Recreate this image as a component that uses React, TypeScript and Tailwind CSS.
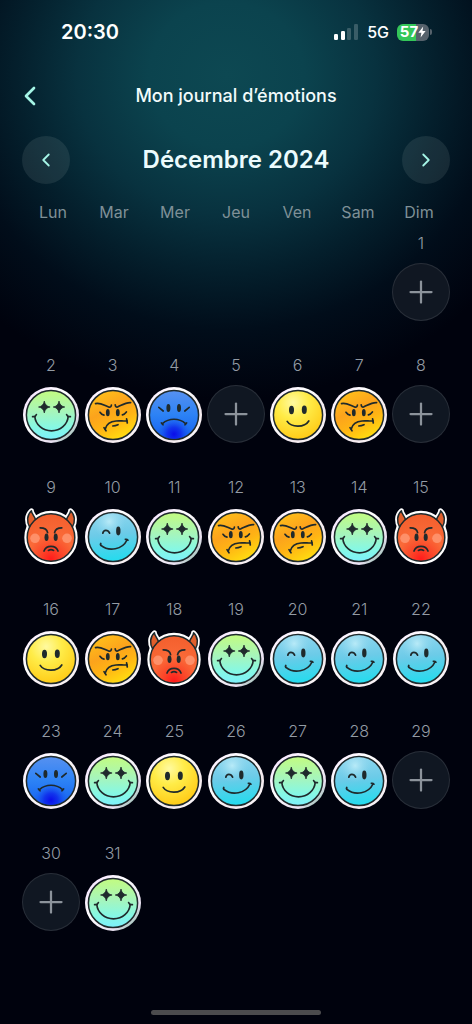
import { ChevronLeft, ChevronRight, Plus } from "lucide-react";
import type { ReactNode } from "react";

type Mood = "joy" | "annoyed" | "sad" | "happy" | "devil" | "wink";

const INK = "#1f2a2c";

const WEEKDAYS = ["Lun", "Mar", "Mer", "Jeu", "Ven", "Sam", "Dim"];

const MOOD_LABELS: Record<Mood, string> = {
  joy: "Émerveillé",
  annoyed: "Agacé",
  sad: "Triste",
  happy: "Content",
  devil: "En colère",
  wink: "Complice",
};

// December 2024 starts on a Sunday, null means nothing was logged that day
const FIRST_DAY_OFFSET = 6;
const ENTRIES: (Mood | null)[] = [
  null,
  "joy", "annoyed", "sad", null, "happy", "annoyed", null,
  "devil", "wink", "joy", "annoyed", "annoyed", "joy", "devil",
  "happy", "annoyed", "devil", "joy", "wink", "wink", "wink",
  "sad", "joy", "happy", "wink", "joy", "wink", null,
  null, "joy",
];

const MoodGradients = () => (
  <svg width="0" height="0" className="absolute" aria-hidden="true">
    <defs>
      <linearGradient id="rim" x1="0" y1="0" x2="1" y2="1">
        <stop offset="0" stopColor="#fbeaff" />
        <stop offset="0.35" stopColor="#ffffff" />
        <stop offset="0.7" stopColor="#f4e9ee" />
        <stop offset="1" stopColor="#ffffff" />
      </linearGradient>
      <linearGradient id="rim-joy" x1="0" y1="0" x2="1" y2="1">
        <stop offset="0" stopColor="#f3dcff" />
        <stop offset="0.4" stopColor="#ffffff" />
        <stop offset="0.75" stopColor="#e8dff0" />
        <stop offset="0.88" stopColor="#9fc4b8" />
        <stop offset="1" stopColor="#ffffff" />
      </linearGradient>
      <linearGradient id="joy" x1="0" y1="0" x2="0" y2="1">
        <stop offset="0.05" stopColor="#c0fb86" />
        <stop offset="0.45" stopColor="#a5f5bd" />
        <stop offset="0.75" stopColor="#86f8e4" />
        <stop offset="1" stopColor="#7cf0fb" />
      </linearGradient>
      <linearGradient id="annoyed" x1="0.2" y1="0" x2="0.7" y2="1">
        <stop offset="0" stopColor="#ffc21a" />
        <stop offset="0.4" stopColor="#fca31c" />
        <stop offset="0.65" stopColor="#ffb414" />
        <stop offset="1" stopColor="#ffe010" />
      </linearGradient>
      <linearGradient id="sad" x1="0" y1="0" x2="0" y2="1">
        <stop offset="0" stopColor="#5791f0" />
        <stop offset="0.5" stopColor="#2c82f5" />
        <stop offset="1" stopColor="#1460f0" />
      </linearGradient>
      <radialGradient id="sad-glow" cx="0.5" cy="0.9" r="0.36">
        <stop offset="0" stopColor="#0a08e8" stopOpacity="0.95" />
        <stop offset="0.4" stopColor="#0c1cea" stopOpacity="0.7" />
        <stop offset="1" stopColor="#1460f0" stopOpacity="0" />
      </radialGradient>
      <radialGradient id="happy" cx="0.4" cy="0.25" r="0.8">
        <stop offset="0" stopColor="#fffaa0" />
        <stop offset="0.4" stopColor="#ffec48" />
        <stop offset="1" stopColor="#ffc812" />
      </radialGradient>
      <radialGradient id="devil" cx="0.5" cy="0.95" r="0.9">
        <stop offset="0" stopColor="#ff1c1c" />
        <stop offset="0.25" stopColor="#fb4428" />
        <stop offset="0.55" stopColor="#fa6a38" />
        <stop offset="1" stopColor="#f4602e" />
      </radialGradient>
      <linearGradient id="wink" x1="0.4" y1="0" x2="0.5" y2="1">
        <stop offset="0" stopColor="#8fd6ee" />
        <stop offset="0.45" stopColor="#6ccbe8" />
        <stop offset="1" stopColor="#22dcee" />
      </linearGradient>
      <radialGradient id="wink-glow" cx="0.42" cy="0.18" r="0.35">
        <stop offset="0" stopColor="#c6f1fb" stopOpacity="0.8" />
        <stop offset="1" stopColor="#8fd6ee" stopOpacity="0" />
      </radialGradient>
    </defs>
  </svg>
);

const Face = ({ fill, rim = "url(#rim)" }: { fill: string; rim?: string }) => (
  <>
    <circle cx="29" cy="30" r="28" fill={rim} />
    <circle cx="29" cy="30" r="24.6" fill={fill} stroke={INK} strokeWidth="1.5" />
  </>
);

const Ink = ({ children }: { children: ReactNode }) => (
  <g fill="none" stroke={INK} strokeWidth="1.7" strokeLinecap="round" strokeLinejoin="round">
    {children}
  </g>
);

const HORNS =
  "M7.6 20C4.6 14.5 4.8 8 9.4 3.8C9.4 6.8 12.6 8.6 13.8 13.6ZM50.4 20C53.4 14.5 53.2 8 48.6 3.8C48.6 6.8 45.4 8.6 44.2 13.6Z";

const MOOD_ART: Record<Mood, ReactNode> = {
  joy: (
    <>
      <Face fill="url(#joy)" rim="url(#rim-joy)" />
      <path
        d="M22.3 16Q23.1 21.2 28.1 22Q23.1 22.8 22.3 28Q21.5 22.8 16.5 22Q21.5 21.2 22.3 16ZM37 16Q37.8 21.2 42.8 22Q37.8 22.8 37 28Q36.2 22.8 31.2 22Q36.2 21.2 37 16Z"
        fill={INK}
        stroke={INK}
        strokeWidth="0.7"
      />
      <Ink>
        <path d="M12.8 31.5C13.5 39.5 20.5 45.8 29.5 45.8S45.5 39.5 46.2 31.5" />
        <path d="M10.6 31.6C12 31.9 13.8 31.4 14.4 29.6M48.4 31.6C47 31.9 45.2 31.4 44.6 29.6" />
      </Ink>
    </>
  ),
  annoyed: (
    <>
      <Face fill="url(#annoyed)" />
      <ellipse cx="23.8" cy="27.7" rx="1.9" ry="3.6" fill={INK} />
      <ellipse cx="33.8" cy="27.7" rx="1.9" ry="3.6" fill={INK} />
      <Ink>
        <path d="M11.5 18.6C16 17.2 20.5 20.6 25.2 22.2Q27.2 22.4 27.4 20" />
        <path d="M31.2 19.8Q31.4 22.4 33.6 22C38 20 42 17.2 46.6 17.6" />
        <path d="M16 27.3Q17.6 29.8 20 30.2M42.4 27Q40.6 29.4 38.4 29.8" />
        <path d="M21.2 44C22.6 38.6 27 36.4 32 36C36.5 35.6 40 36.4 43 35.8" />
        <path d="M20 42.6L22 45.8M42.6 33.8L43.3 38M28.8 41Q31.4 40.8 34 39.7" />
      </Ink>
    </>
  ),
  sad: (
    <>
      <Face fill="url(#sad)" />
      <circle cx="29" cy="30" r="23.9" fill="url(#sad-glow)" />
      <ellipse cx="23.4" cy="23" rx="2" ry="4.1" fill={INK} />
      <ellipse cx="34" cy="23" rx="2" ry="4.1" fill={INK} />
      <Ink>
        <path d="M13.8 22.4L18.2 26M44.2 22.4L39.8 26" />
        <path d="M17.4 38.6C24 32.8 34 32.8 40.6 38.6" />
        <path d="M16.4 38L18 39.8M41.6 38L40 39.8" />
      </Ink>
    </>
  ),
  happy: (
    <>
      <Face fill="url(#happy)" />
      <ellipse cx="22.5" cy="25" rx="2.5" ry="4.2" fill={INK} />
      <ellipse cx="35.3" cy="24.8" rx="2.5" ry="4.2" fill={INK} />
      <Ink>
        <path d="M18.2 36.4C22.4 42.8 35.6 42.8 39.8 36" />
      </Ink>
    </>
  ),
  devil: (
    <>
      <g fill="#fff" stroke="#fff" strokeWidth="5" strokeLinejoin="round">
        <circle cx="29" cy="30.5" r="24.2" />
        <path d={HORNS} />
      </g>
      <path d={HORNS} fill="#e05f2c" stroke={INK} strokeWidth="1.5" strokeLinejoin="round" />
      <circle cx="29" cy="30.5" r="23.8" fill="url(#devil)" stroke={INK} strokeWidth="1.5" />
      <circle cx="13" cy="31.3" r="4.8" fill="#ff9a76" opacity="0.8" />
      <circle cx="45" cy="31.3" r="4.8" fill="#ff9a76" opacity="0.8" />
      <ellipse cx="24.5" cy="30.2" rx="2" ry="3.8" fill={INK} />
      <ellipse cx="33.7" cy="30.2" rx="2" ry="3.8" fill={INK} />
      <Ink>
        <path d="M18.2 20.8C22.4 20.8 25 22.4 25.6 25.6M39.8 20.8C35.6 20.8 33.2 22.4 32.6 25.6" />
        <path d="M22 44C24.2 37.8 33.8 37.8 36 44M26.4 43.4Q29 42 31.6 43.4" />
      </Ink>
    </>
  ),
  wink: (
    <>
      <Face fill="url(#wink)" />
      <circle cx="29" cy="30" r="23.9" fill="url(#wink-glow)" />
      <ellipse cx="34.3" cy="24" rx="2.2" ry="4.4" fill={INK} />
      <Ink>
        <path d="M18.8 26.2C19.6 22.6 23.8 22.4 25.6 26.2" />
        <path d="M17 38.4C25 45 38.5 42.6 43 33" />
        <path d="M16.8 36.4Q16 38 17 38.4M41.4 32.4Q43 32 44 33.2" />
      </Ink>
    </>
  ),
};

const StatusBar = () => (
  <div className="flex h-16 items-center justify-between pr-10 pl-[61px] text-white">
    <span className="text-xl font-semibold">20:30</span>
    <div className="flex items-center gap-2">
      <svg width="25" height="16" viewBox="0 0 25 16" aria-hidden="true">
        <rect x="0" y="10" width="4" height="6" rx="1.2" fill="#fff" />
        <rect x="7" y="7" width="4" height="9" rx="1.2" fill="#fff" />
        <rect x="13" y="4" width="4" height="12" rx="1.2" fill="#fff" opacity="0.2" />
        <rect x="20" y="0" width="4" height="16" rx="1.2" fill="#fff" opacity="0.2" />
      </svg>
      <span className="text-base font-medium">5G</span>
      <div className="flex items-center gap-px">
        <div className="flex h-[17px] w-8 items-center justify-center rounded-md bg-linear-to-r from-[#34c759] from-58% to-[#56626c] to-58%">
          <span className="text-[15px] leading-4 font-bold">57</span>
          <svg width="8" height="12" viewBox="0 0 8 12" fill="currentColor" aria-hidden="true">
            <path d="M5.2 0.5L0.4 6.8H3.4L2.6 11.5L7.6 5H4.5Z" />
          </svg>
        </div>
        <div className="h-[6px] w-[2px] rounded-r-full bg-[#56626c]" />
      </div>
    </div>
  </div>
);

const DayCell = ({ day, mood }: { day: number; mood: Mood | null }) => (
  <div className="flex h-[122px] flex-col items-center gap-[11px]">
    <span className="text-base leading-[18px] font-light text-[#939ba4]">{day}</span>
    {mood ? (
      <button type="button" aria-label={`${day} décembre, ${MOOD_LABELS[mood]}`} className="size-[58px]">
        <svg viewBox="0 0 58 58" className="size-full overflow-visible" aria-hidden="true">
          {MOOD_ART[mood]}
        </svg>
      </button>
    ) : (
      <button
        type="button"
        aria-label={`Ajouter une émotion le ${day} décembre`}
        className="flex size-[58px] items-center justify-center rounded-full border border-white/10 bg-[#101722] text-[#8c939b]"
      >
        <Plus size={36} strokeWidth={1.5} />
      </button>
    )}
  </div>
);

export default function App() {
  return (
    <main className="flex min-h-screen flex-col bg-[#00020d] bg-[radial-gradient(ellipse_310px_290px_at_48%_75px,#0d4852_0%,#0b434e_25%,#08323f_48%,#041f2c_68%,#010d1a_88%,#00020d_112%)] font-['Inter',sans-serif]">
      <MoodGradients />
      <StatusBar />

      <header className="grid h-16 grid-cols-[24px_1fr_24px] items-center px-[18px]">
        <button type="button" aria-label="Retour" className="flex justify-center text-[#a5f5e6]">
          <ChevronLeft size={32} strokeWidth={2} className="shrink-0" />
        </button>
        <h1 className="text-center text-lg font-medium text-[#f2fbfb]">Mon journal d’émotions</h1>
      </header>

      <div className="mt-2 flex items-center justify-between px-[22px]">
        <button
          type="button"
          aria-label="Mois précédent"
          className="flex size-12 items-center justify-center rounded-full bg-[#8fa3a3]/15 text-[#a5f5e6]"
        >
          <ChevronLeft size={22} strokeWidth={2} />
        </button>
        <h2 className="text-2xl font-semibold text-[#ecfbfd]">Décembre 2024</h2>
        <button
          type="button"
          aria-label="Mois suivant"
          className="flex size-12 items-center justify-center rounded-full bg-[#8fa3a3]/15 text-[#a5f5e6]"
        >
          <ChevronRight size={22} strokeWidth={2} />
        </button>
      </div>

      <div className="mt-[18px] grid grid-cols-[repeat(7,58px)] justify-between px-6 text-center text-base leading-5 text-[#7f9097]">
        {WEEKDAYS.map((name) => (
          <span key={name}>{name}</span>
        ))}
      </div>

      <div className="mt-3 grid grid-cols-[repeat(7,58px)] justify-between px-[22px]">
        {Array.from({ length: FIRST_DAY_OFFSET }, (_, i) => (
          <div key={`blank-${i}`} />
        ))}
        {ENTRIES.map((mood, i) => (
          <DayCell key={i} day={i + 1} mood={mood} />
        ))}
      </div>

      <div className="mt-auto flex justify-center pb-[9px]">
        <div className="h-[5px] w-[170px] rounded-full bg-[#4b4b4d]" />
      </div>
    </main>
  );
}
